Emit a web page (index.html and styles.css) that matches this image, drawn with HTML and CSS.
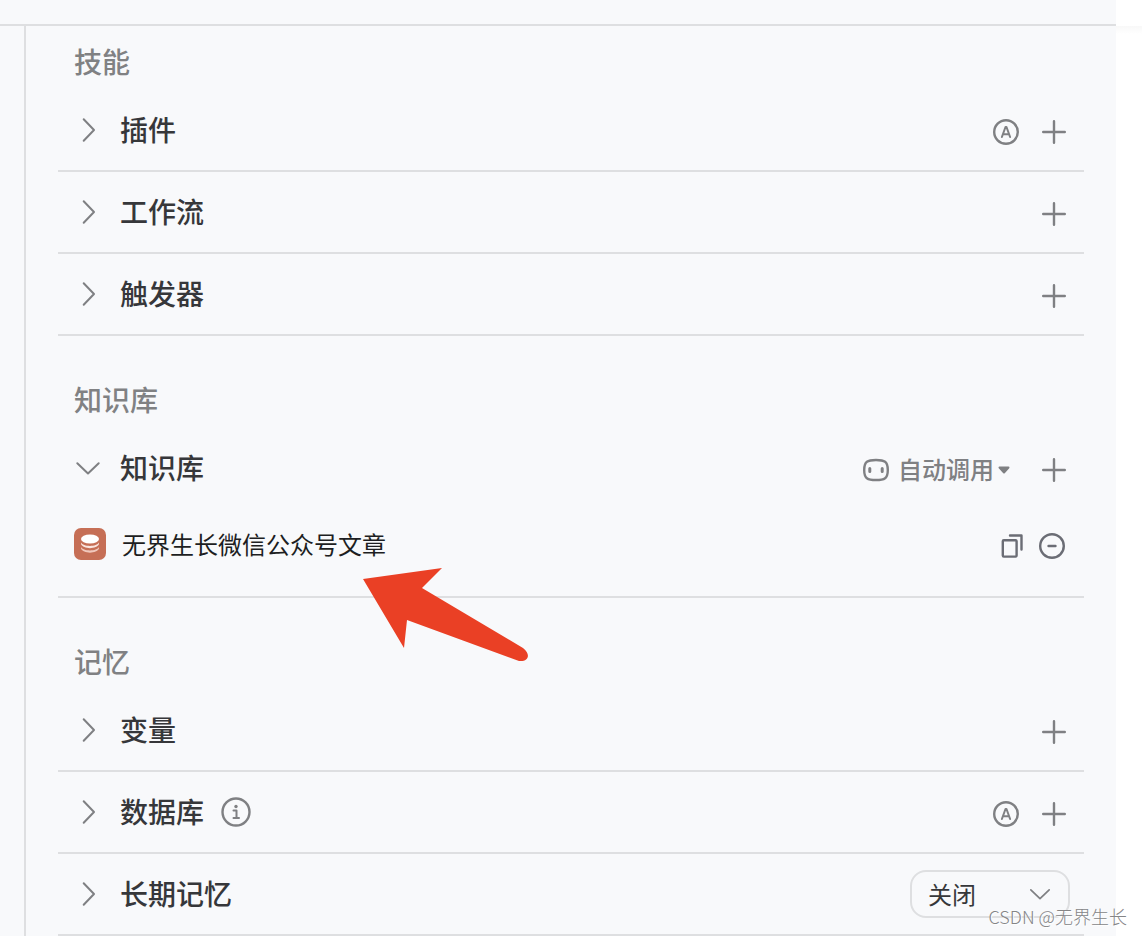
FILE: index.html
```
<!DOCTYPE html>
<html lang="zh-CN">
<head>
    <meta charset="UTF-8">
    <meta name="viewport" content="width=device-width, initial-scale=1.0">
    <title>技能</title>
    <link rel="stylesheet" href="styles.css">
</head>
<body>
    <svg class="sprite" aria-hidden="true">
        <symbol id="right" viewBox="0 0 28 28"><path d="M9.700 3.300L20 14L9.700 24.700" /></symbol>
        <symbol id="down" viewBox="0 0 28 28"><path d="M3.300 9.200L14 19.500L24.700 9.200" /></symbol>
        <symbol id="plus" viewBox="0 0 28 28"><path d="M14 3.200V24.800M3.200 14H24.800" /></symbol>
        <symbol id="auto" viewBox="0 0 28 28">
            <circle cx="14" cy="14" r="11.800" />
            <path d="M9.900 19L13.500 9H14.500L18.100 19M11.200 16.200H16.800" stroke-width="2" />
        </symbol>
    </svg>
    <div class="topbar"></div>
    <div class="layout">
        <main class="panel">
            <section class="group">
                <h2>技能</h2>
                <div class="row">
                    <button class="toggle"><svg class="icon thin"><use href="#right" /></svg><span>插件</span></button>
                    <div class="actions">
                        <button class="action" aria-label="自动添加"><svg class="icon"><use href="#auto" /></svg></button>
                        <button class="action" aria-label="添加插件"><svg class="icon"><use href="#plus" /></svg></button>
                    </div>
                </div>
                <div class="row">
                    <button class="toggle"><svg class="icon thin"><use href="#right" /></svg><span>工作流</span></button>
                    <div class="actions">
                        <button class="action" aria-label="添加工作流"><svg class="icon"><use href="#plus" /></svg></button>
                    </div>
                </div>
                <div class="row">
                    <button class="toggle"><svg class="icon thin"><use href="#right" /></svg><span>触发器</span></button>
                    <div class="actions">
                        <button class="action" aria-label="添加触发器"><svg class="icon"><use href="#plus" /></svg></button>
                    </div>
                </div>
            </section>

            <section class="group">
                <h2>知识库</h2>
                <div class="row open">
                    <button class="toggle"><svg class="icon thin"><use href="#down" /></svg><span>知识库</span></button>
                    <div class="actions">
                        <button class="mode" aria-haspopup="menu">
                            <svg class="icon" viewBox="0 0 28 28">
                                <path d="M14 4C22.500 4 25.800 5.500 25.800 14S22.500 24 14 24S2.200 22.500 2.200 14S5.500 4 14 4Z" />
                                <path class="eyes" d="M7.800 12.500V15.500M20.200 12.500V15.500" />
                            </svg>
                            <span>自动调用</span>
                            <svg class="caret" viewBox="0 0 12 8"><path d="M1.500 1.500H10.500L6 6.500Z" /></svg>
                        </button>
                        <button class="action" aria-label="添加知识库"><svg class="icon"><use href="#plus" /></svg></button>
                    </div>
                </div>
                <div class="item">
                    <svg class="item-icon" viewBox="0 0 32 32">
                        <rect width="32" height="32" rx="7" fill="#c66f56" />
                        <ellipse cx="16" cy="11" rx="9" ry="4.500" fill="#fff" />
                        <path d="M7 14.500C9 19 23 19 25 14.500V16C23 21.500 9 21.500 7 16Z" fill="#fae5df" />
                        <path d="M7 19C9 23.500 23 23.500 25 19V20.500C23 26 9 26 7 20.500Z" fill="#f0c8bc" />
                    </svg>
                    <span class="item-name">无界生长微信公众号文章</span>
                    <div class="item-actions">
                        <button class="action" aria-label="复制"><svg class="icon" viewBox="0 0 28 28">
                            <rect x="4.800" y="8.200" width="13.800" height="16.400" rx="1" />
                            <path d="M12 3.500H23.500V17.500" />
                        </svg></button>
                        <button class="action" aria-label="移除"><svg class="icon" viewBox="0 0 28 28">
                            <circle cx="14" cy="14" r="11.800" />
                            <path d="M10.500 14H17.500" />
                        </svg></button>
                    </div>
                </div>
            </section>

            <section class="group">
                <h2>记忆</h2>
                <div class="row">
                    <button class="toggle"><svg class="icon thin"><use href="#right" /></svg><span>变量</span></button>
                    <div class="actions">
                        <button class="action" aria-label="添加变量"><svg class="icon"><use href="#plus" /></svg></button>
                    </div>
                </div>
                <div class="row">
                    <button class="toggle"><svg class="icon thin"><use href="#right" /></svg><span>数据库</span></button>
                    <button class="action info" aria-label="说明"><svg class="icon" viewBox="0 0 32 32">
                        <circle cx="16" cy="16" r="13.500" />
                        <path d="M13.500 14.500H16.500V21.500M13.500 22H19" stroke-width="2" />
                        <circle class="dot" cx="16" cy="10.500" r="1.700" />
                    </svg></button>
                    <div class="actions">
                        <button class="action" aria-label="自动添加"><svg class="icon"><use href="#auto" /></svg></button>
                        <button class="action" aria-label="添加数据库"><svg class="icon"><use href="#plus" /></svg></button>
                    </div>
                </div>
                <div class="row">
                    <button class="toggle"><svg class="icon thin"><use href="#right" /></svg><span>长期记忆</span></button>
                    <div class="select">
                        <select aria-label="长期记忆">
                            <option>关闭</option>
                            <option>开启</option>
                        </select>
                        <svg class="icon thin"><use href="#down" /></svg>
                    </div>
                </div>
            </section>

            <svg class="pointer" viewBox="0 0 168 96" aria-hidden="true">
                <path d="M1 12L80 1L60 21L161 81C169 87 167 95 157 94L45 53L42 81Z" />
            </svg>
        </main>
    </div>
    <div class="watermark">CSDN @无界生长</div>
</body>
</html>
```
FILE: styles.css
```
* {
    box-sizing: border-box;
}

body {
    position: relative;
    display: flex;
    flex-direction: column;
    min-height: 100vh;
    margin: 0;
    background: #fff;
    color: #36373a;
    font-family: "Noto Sans CJK SC", sans-serif;
}

button {
    padding: 0;
    border: none;
    background: none;
    color: inherit;
    font: inherit;
    cursor: pointer;
}

.sprite {
    position: absolute;
    width: 0;
    height: 0;
}

.topbar {
    height: 26px;
    margin-right: 26px;
    background: #f8f9fb;
    border-bottom: 2px solid #dedfe1;
}

.layout {
    display: flex;
    flex: 1;
    padding: 0 26px 0 24px;
    background: linear-gradient(to right, #f8f9fb calc(100% - 26px), transparent 0), linear-gradient(#f8f8f8, #fff 8px);
}

.panel {
    position: relative;
    flex: 1;
    padding: 8px 32px 0;
    border-left: 2px solid #dedfe1;
}

.group + .group {
    margin-top: 36px;
}

h2 {
    margin: 0;
    padding: 0 0 2px 16px;
    color: #808183;
    font-size: 28px;
    font-weight: 500;
    line-height: 54px;
}

.row {
    display: flex;
    align-items: center;
    height: 82px;
    padding: 0 14px 0 16px;
    border-bottom: 2px solid #dedfe1;
}

.row.open {
    height: 80px;
    border-bottom: none;
}

.toggle {
    display: flex;
    align-items: center;
    gap: 18px;
    font-size: 28px;
    font-weight: 500;
    line-height: 38px;
}

.toggle span {
    padding-bottom: 2px;
}

.icon {
    width: 28px;
    height: 28px;
    fill: none;
    stroke: #7f8083;
    stroke-width: 2.4;
    stroke-linecap: round;
    stroke-linejoin: round;
}

.icon.thin {
    stroke-width: 2;
}

.actions {
    display: flex;
    align-items: center;
    gap: 16px;
    margin: 4px 0 0 auto;
}

.action {
    display: flex;
    align-items: center;
    justify-content: center;
    width: 32px;
    height: 32px;
}

.info {
    margin-left: 16px;
}

.info .icon {
    width: 32px;
    height: 32px;
}

.icon .dot {
    fill: #7f8083;
    stroke: none;
}

.mode {
    display: flex;
    align-items: center;
    margin-right: 12px;
    color: #7f8083;
    font-size: 24px;
    font-weight: 500;
    line-height: 30px;
}

.mode span {
    padding-bottom: 2px;
}

.mode .icon {
    margin-right: 8px;
}

.mode .eyes {
    stroke-width: 3;
}

.caret {
    width: 12px;
    height: 8px;
    margin-left: 4px;
    fill: #7f8083;
    stroke: #7f8083;
    stroke-width: 2;
    stroke-linejoin: round;
}

.item {
    display: flex;
    align-items: center;
    height: 90px;
    padding: 0 16px 16px;
    border-bottom: 2px solid #dedfe1;
    color: #1d1e22;
    font-size: 24px;
    line-height: 32px;
}

.item-icon {
    width: 32px;
    height: 32px;
    margin-right: 16px;
}

.item-actions {
    display: flex;
    gap: 8px;
    margin: 4px 0 0 auto;
}

.item-actions .icon {
    stroke: #6b6d75;
}

.select {
    position: relative;
    width: 160px;
    margin-left: auto;
}

.select select {
    display: block;
    width: 100%;
    height: 48px;
    padding: 0 16px 2px;
    border: 2px solid #dedfe1;
    border-radius: 16px;
    background: transparent;
    color: #36373a;
    font: inherit;
    font-size: 24px;
    appearance: none;
}

.select .icon {
    position: absolute;
    top: 12px;
    right: 18px;
    width: 24px;
    height: 24px;
    pointer-events: none;
}

.pointer {
    position: absolute;
    top: 541px;
    left: 336px;
    width: 168px;
    height: 96px;
    fill: #ea4025;
}

.watermark {
    position: absolute;
    right: 15px;
    bottom: 8px;
    color: #858587;
    font-size: 18px;
    font-weight: 300;
    line-height: 24px;
    text-shadow: 1px 1px 0 #fff;
}
```
